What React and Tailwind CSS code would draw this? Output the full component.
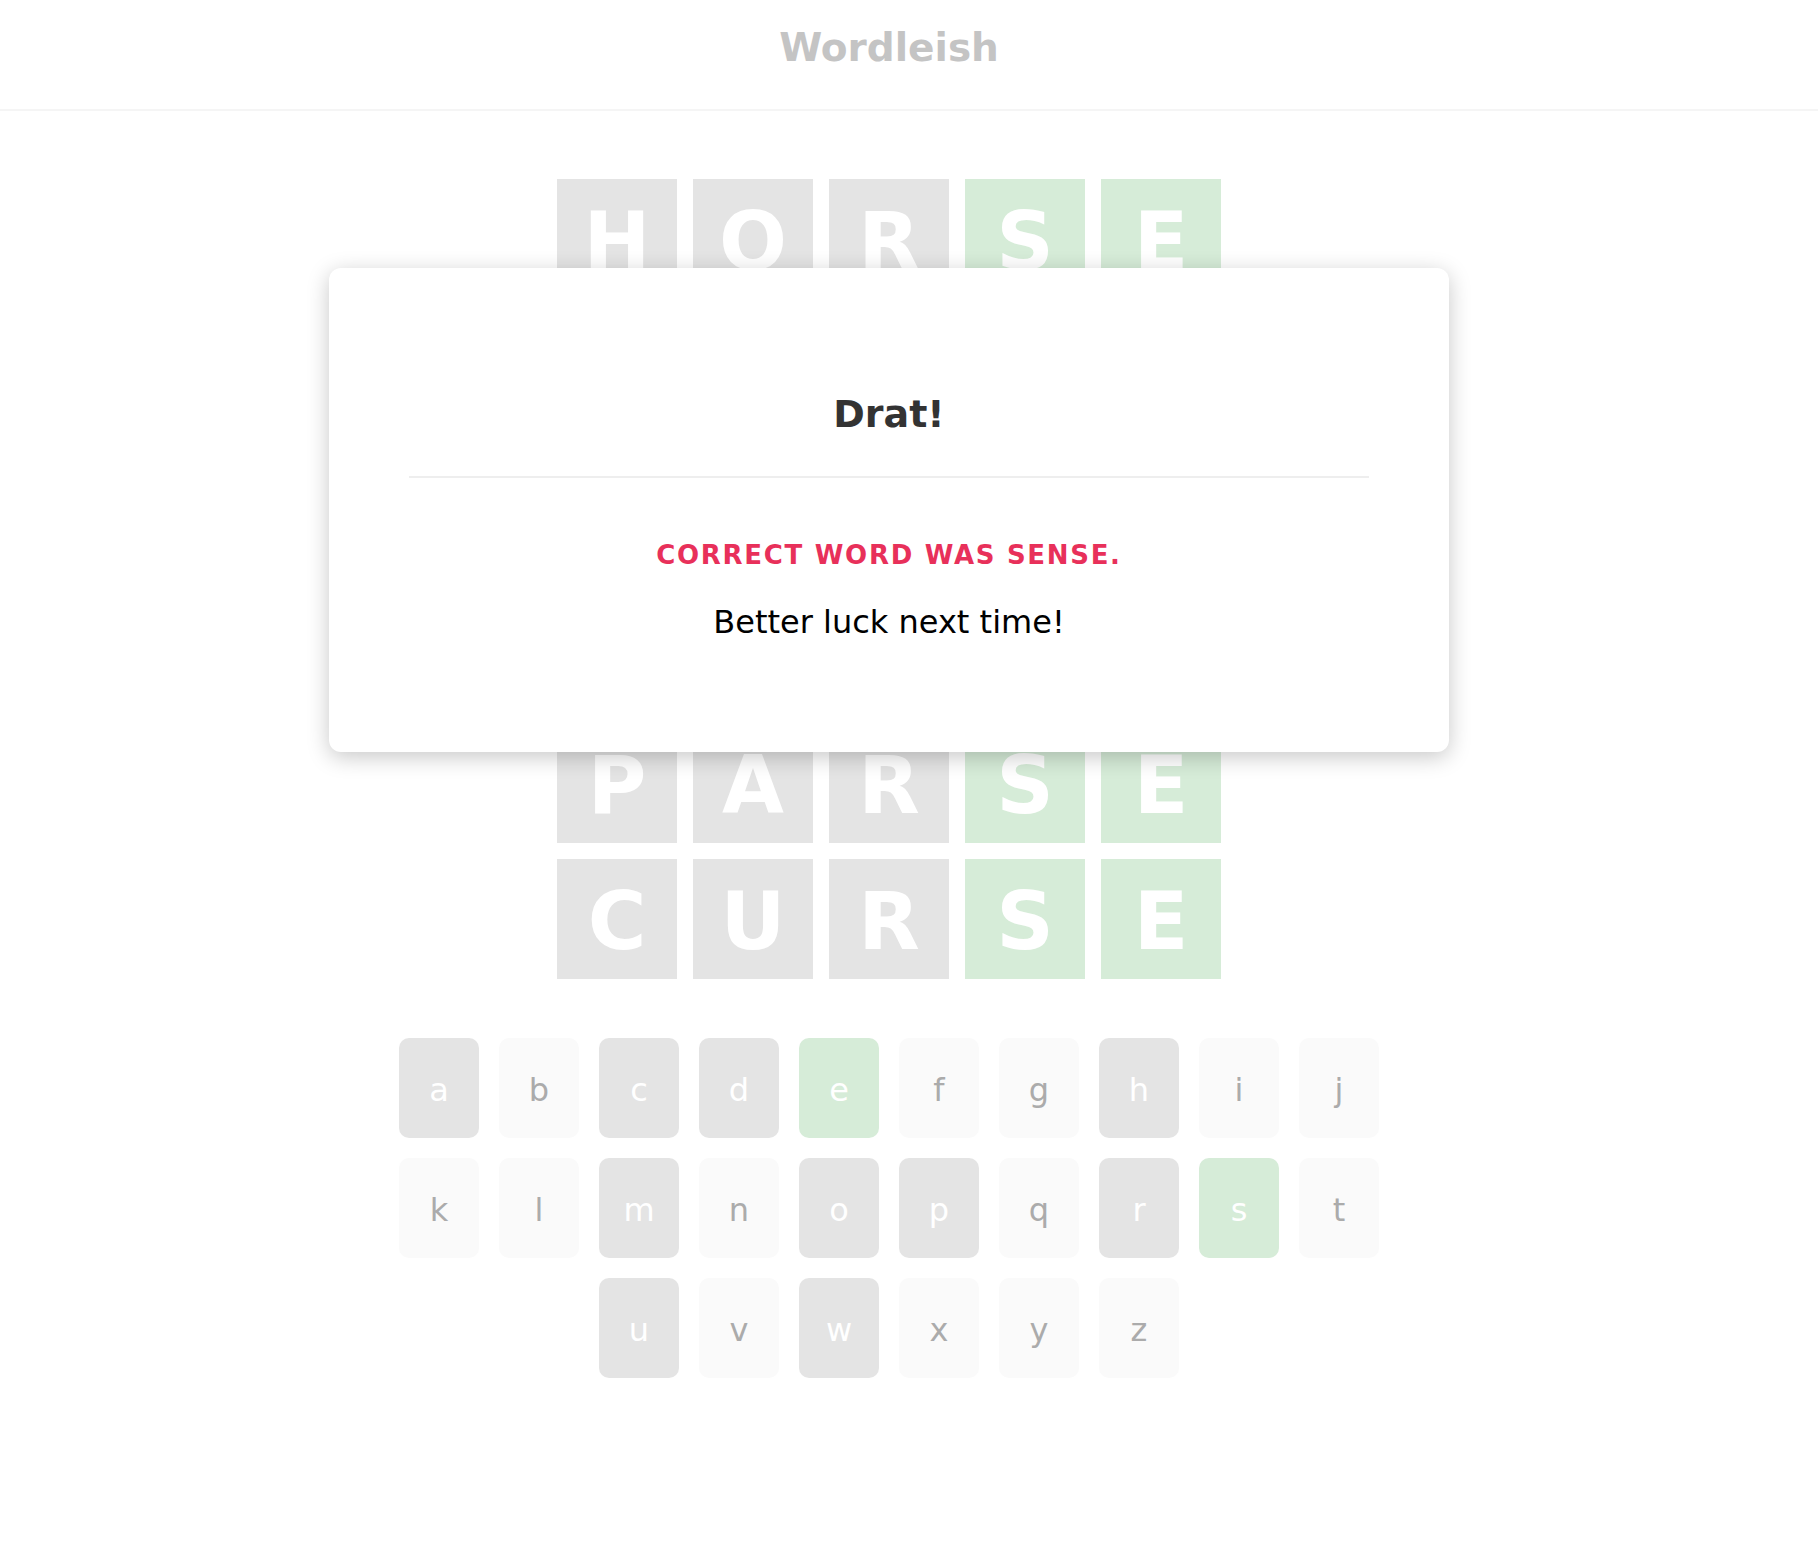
const rows = [
  ["HORSE", "xxxgg"],
  ["WORSE", "xxxgg"],
  ["DOUSE", "xxxgg"],
  ["MOUSE", "xxxgg"],
  ["PARSE", "xxxgg"],
  ["CURSE", "xxxgg"],
];

const used = "acdhmopruw";
const found = "es";

const keyRows = ["abcdefghij", "klmnopqrst", "uvwxyz"];

const Tile = ({ letter, state }) => (
  <div
    className={`w-[120px] h-[120px] flex items-center justify-center pt-[6px] text-[80px] font-bold text-white ${
      state === "g" ? "bg-[#d6ecd8]" : "bg-[#e4e4e4]"
    }`}
  >
    {letter}
  </div>
);

const Key = ({ k }) => {
  let cls = "bg-[#fafafa] text-[#ababab]";
  if (found.includes(k)) cls = "bg-[#d6ecd8] text-white";
  else if (used.includes(k)) cls = "bg-[#e4e4e4] text-white";
  return (
    <div className={`w-[80px] h-[100px] rounded-[10px] flex items-center justify-center pt-[3px] text-[32px] ${cls}`}>
      {k}
    </div>
  );
};

export default function App() {
  return (
    <div className="relative min-h-[1566px] bg-white font-['DejaVu_Sans',sans-serif]">
      {/* Header */}
      <header className="h-[111px] border-b-2 border-[#f5f5f5] pr-[40px] pt-[25px] text-center">
        <h1 className="text-[39px] font-bold text-[#c4c4c4] leading-[46px]">Wordleish</h1>
      </header>

      <main className="pr-[40px] pt-[68px] flex flex-col items-center">
        {/* Board */}
        <div className="flex flex-col gap-[16px]">
          {rows.map(([word, states], i) => (
            <div key={i} className="flex gap-[16px]">
              {word.split("").map((l, j) => (
                <Tile key={j} letter={l} state={states[j]} />
              ))}
            </div>
          ))}
        </div>

        {/* Keyboard */}
        <div className="mt-[59px] flex flex-col gap-[20px]">
          {keyRows.map((r, i) => (
            <div key={i} className="flex justify-center gap-[20px]">
              {r.split("").map((k) => (
                <Key key={k} k={k} />
              ))}
            </div>
          ))}
        </div>
      </main>

      {/* Result modal */}
      <div className="absolute top-[268px] left-0 right-[40px] flex justify-center">
        <div className="w-[1120px] bg-white rounded-[12px] shadow-[0_5px_22px_0_rgba(0,0,0,0.22)] px-[80px] pt-[124px] pb-[111px] text-center">
          <h2 className="text-[38px] font-bold text-[#333333] leading-[44px]">Drat!</h2>
          <div className="mt-[40px] h-[2px] bg-[#eeeeee]"></div>
          <p className="mt-[62px] text-[26px] font-bold uppercase tracking-[1.7px] text-[#e8305a] leading-[30px]">
            Correct word was sense.
          </p>
          <p className="mt-[34px] text-[32px] text-black leading-[37px]">Better luck next time!</p>
        </div>
      </div>
    </div>
  );
}
